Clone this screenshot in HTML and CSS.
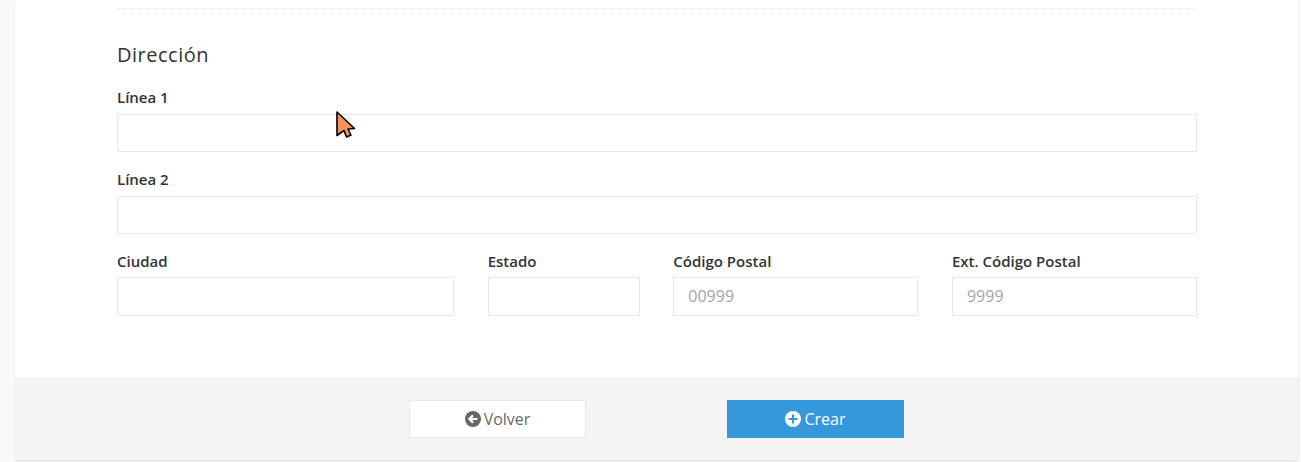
FILE: index.html
```html
<!DOCTYPE html>
<html lang="es">
<head>
  <meta charset="UTF-8">
  <meta name="viewport" content="width=device-width, initial-scale=1.0">
  <title>Dirección</title>
  <link rel="stylesheet" href="styles.css">
</head>
<body>
  <div class="panel">
    <div class="panel-body">
      <div class="divider"></div>
      <h2>Dirección</h2>
      <div class="field">
        <label for="line1">Línea 1</label>
        <input type="text" id="line1">
      </div>
      <div class="field">
        <label for="line2">Línea 2</label>
        <input type="text" id="line2">
      </div>
      <div class="row">
        <div class="field">
          <label for="city">Ciudad</label>
          <input type="text" id="city">
        </div>
        <div class="field">
          <label for="state">Estado</label>
          <input type="text" id="state">
        </div>
        <div class="field">
          <label for="zip">Código Postal</label>
          <input type="text" id="zip" placeholder="00999">
        </div>
        <div class="field">
          <label for="zip-ext">Ext. Código Postal</label>
          <input type="text" id="zip-ext" placeholder="9999">
        </div>
      </div>
    </div>
    <div class="panel-footer">
      <button type="button" class="btn btn-back">
        <svg class="icon" viewBox="0 0 16 16"><circle cx="8" cy="8" r="8" fill="currentColor"/><path d="M12.5 8H5M8 4.4 4.4 8 8 11.6" fill="none" stroke="#fff" stroke-width="2.2"/></svg>
        Volver
      </button>
      <button type="button" class="btn btn-create">
        <svg class="icon" viewBox="0 0 16 16"><circle cx="8" cy="8" r="8" fill="currentColor"/><path d="M8 3.6v8.8M3.6 8h8.8" fill="none" stroke="#3498db" stroke-width="2.2"/></svg>
        Crear
      </button>
    </div>
  </div>

  <!-- cursor de la captura -->
  <svg class="cursor" viewBox="0 0 20 27"><path d="M1 1 18.500 17.500 12 18 15 24 10.500 26 8 19.500 1 24.500Z" fill="#f8935a" stroke="#000" stroke-width="1.600" stroke-linejoin="round"/></svg>
</body>
</html>
```

FILE: styles.css
```css
* {
  box-sizing: border-box;
}

body {
  margin: 0;
  height: 462px;
  overflow: hidden;
  padding: 0 3px 0 15px;
  background-color: #f8f9fb;
  font-family: "Open Sans", sans-serif;
  color: #333;
}

.panel {
  background-color: white;
  box-shadow: 0 1px 2px rgba(0, 0, 0, 0.12);
  border-radius: 0 0 3px 3px;
}

.panel-body {
  height: 377px;
  padding: 8px 101px 0 102px;
}

.divider {
  border-top: 1px dotted #e8e8e8;
}

h2 {
  margin: 32px 0 0;
  font-size: 20px;
  line-height: 28px;
  font-weight: 400;
  letter-spacing: 0.5px;
  color: #333;
}

.field {
  margin-top: 19px;
}

.field + .field {
  margin-top: 18px;
}

label {
  display: block;
  height: 20px;
  margin-bottom: 6px;
  font-size: 15px;
  line-height: 18px;
  font-weight: 600;
  color: #333;
}

input {
  display: block;
  width: 100%;
  height: 38px;
  padding: 0 14px;
  border: 1px solid #e9e9e9;
  background-color: white;
  font-family: inherit;
  font-size: 16px;
}

input::placeholder {
  color: #a5a5a5;
}

.row {
  display: grid;
  grid-template-columns: 337px 152px 245px 245px;
  column-gap: 33.670px;
  margin-top: 18px;
}

.row .field {
  margin-top: 0;
}

.row label {
  margin-bottom: 5px;
}

.row input {
  height: 39px;
  padding-bottom: 2px;
}

.panel-footer {
  display: flex;
  justify-content: center;
  gap: 141px;
  height: 83px;
  padding-top: 23px;
  background-color: #f5f5f5;
  border-radius: 0 0 3px 3px;
}

.btn {
  display: flex;
  align-items: center;
  justify-content: center;
  gap: 3px;
  width: 177px;
  height: 38px;
  padding: 0;
  font-family: inherit;
  font-size: 16px;
  cursor: pointer;
}

.btn-back {
  background-color: white;
  border: 1px solid #e9e9e9;
  color: #666;
}

.btn-create {
  background-color: #3498db;
  border: none;
  color: white;
}

.icon {
  width: 16px;
  height: 16px;
}

.cursor {
  position: absolute;
  left: 336px;
  top: 111px;
  width: 20px;
  height: 27px;
}
```
